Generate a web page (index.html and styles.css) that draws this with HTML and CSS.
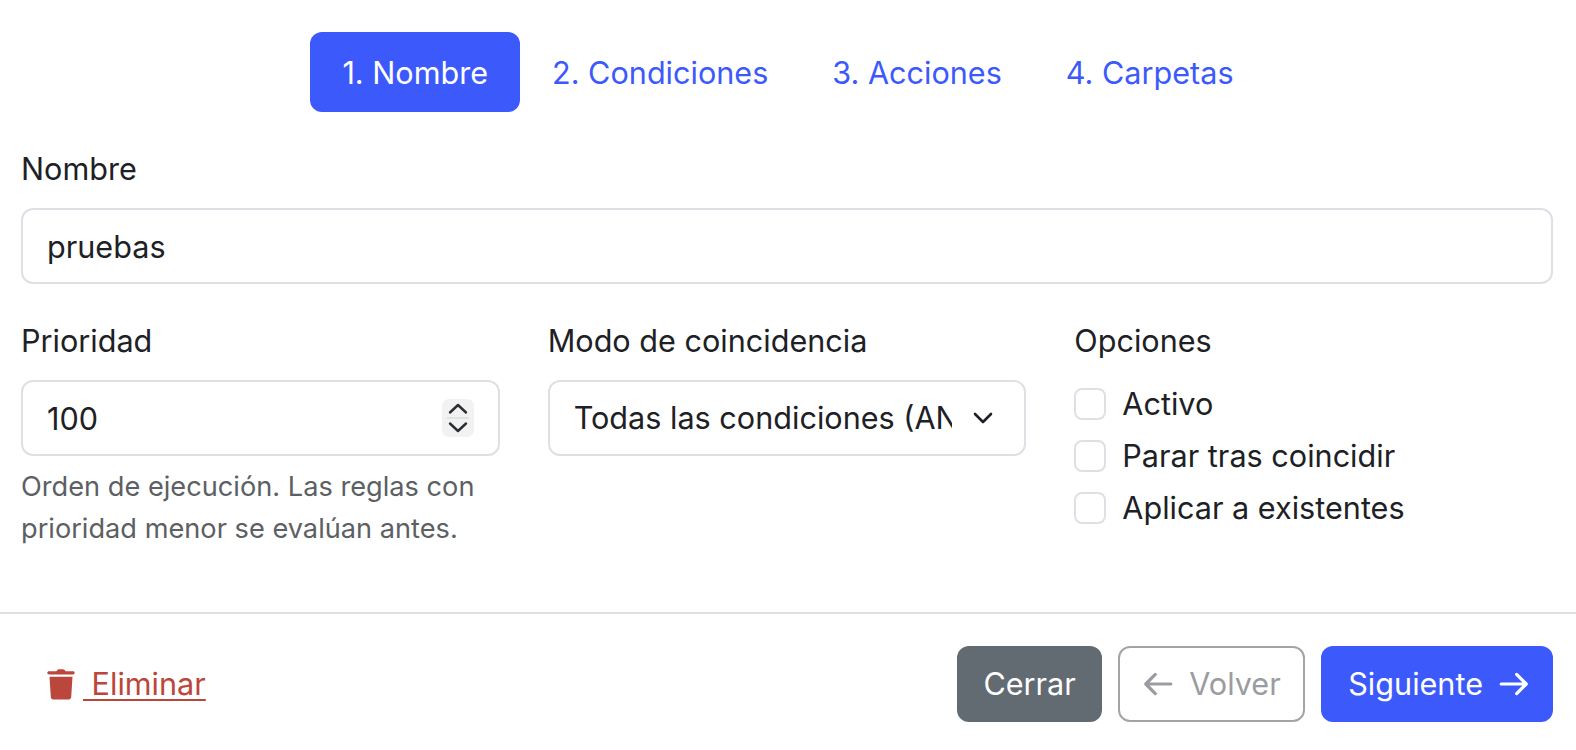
FILE: index.html
```html
<!DOCTYPE html>
<html lang="es">
<head>
<meta charset="utf-8">
<title>Regla</title>
<link rel="stylesheet" href="styles.css">
</head>
<body>
<div class="modal">
  <nav class="tabs">
    <a class="tab active">1. Nombre</a>
    <a class="tab">2. Condiciones</a>
    <a class="tab">3. Acciones</a>
    <a class="tab">4. Carpetas</a>
  </nav>
  <div class="field-name">
    <label class="label">Nombre</label>
    <input class="control" type="text" value="pruebas">
  </div>
  <div class="columns">
    <div>
      <label class="label">Prioridad</label>
      <div class="control-wrap">
        <input class="control" type="text" value="100">
        <span class="stepper">
          <svg viewBox="0 0 32 38" width="32" height="38"><rect width="32" height="38" rx="7" fill="#f2f2f3"/><path d="M5 19h22" stroke="#dcdcde" stroke-width="1.5"/><path d="M8 13.5 16 6l8 7.5M8 24.5l8 7.5 8-7.5" fill="none" stroke="#2a2e33" stroke-width="2.4" stroke-linecap="round" stroke-linejoin="round"/></svg>
        </span>
      </div>
      <p class="hint">Orden de ejecución. Las reglas con prioridad menor se evalúan antes.</p>
    </div>
    <div>
      <label class="label">Modo de coincidencia</label>
      <div class="control-wrap">
        <select class="control select"><option>Todas las condiciones (AND)</option></select>
        <svg class="chevron" viewBox="0 0 20 12" width="20" height="12"><path d="M2 2l8 8 8-8" fill="none" stroke="#1d2125" stroke-width="2.6" stroke-linecap="round" stroke-linejoin="round"/></svg>
      </div>
    </div>
    <div>
      <span class="label">Opciones</span>
      <label class="check"><input type="checkbox"><span>Activo</span></label>
      <label class="check"><input type="checkbox"><span>Parar tras coincidir</span></label>
      <label class="check"><input type="checkbox"><span>Aplicar a existentes</span></label>
    </div>
  </div>
  <footer class="footer">
    <a class="delete">
      <svg viewBox="0 0 28 32" width="28" height="32"><path d="M9.5 3.2C10 1.9 11 1.2 12.2 1.2h3.6c1.2 0 2.2.7 2.7 2H26c1 0 1.7.7 1.7 1.6S27 6.500 26 6.500H2C1 6.500.3 5.700.3 4.800S1 3.200 2 3.200zM2.500 8.800h23L24.200 29c-.1 1.500-1.300 2.600-2.800 2.600H6.600c-1.500 0-2.700-1.100-2.800-2.600z" fill="#bb463c"/></svg>
      <span class="delete-text">&nbsp;Eliminar</span>
    </a>
    <div class="actions">
      <button class="btn btn-gray">Cerrar</button>
      <button class="btn btn-outline">
        <svg viewBox="0 0 30 24" width="32" height="26"><path d="M27 12H4M12.500 3 3.500 12l9 9" fill="none" stroke="currentColor" stroke-width="3" stroke-linecap="round" stroke-linejoin="round"/></svg>
        Volver
      </button>
      <button class="btn btn-primary">
        Siguiente
        <svg viewBox="0 0 30 24" width="32" height="26"><path d="M3 12h23M17.500 3l9 9-9 9" fill="none" stroke="currentColor" stroke-width="3" stroke-linecap="round" stroke-linejoin="round"/></svg>
      </button>
    </div>
  </footer>
</div>
</body>
</html>
```

FILE: styles.css
```css
* { box-sizing: border-box; }
html, body { margin: 0; background: #fff; }
body {
  font-family: Inter, "Liberation Sans", sans-serif;
  font-size: 30.6px;
  line-height: 46px;
  color: #1d2125;
}
.modal { width: 1576px; height: 750px; overflow: hidden; }
.tabs {
  display: flex;
  justify-content: center;
  padding-top: 32px;
}
.tab {
  padding: 18px 32px;
  border-radius: 12px;
  color: #3c59fb;
  height: 80px;
}
.tab.active { background: #3c59fb; color: #fff; }
.field-name { padding: 34px 23px 0 21px; }
.label { display: block; height: 46px; margin-bottom: 16px; }
.control {
  display: block;
  width: 100%;
  height: 76px;
  padding: 0 24px;
  border: 2px solid #dfe0e5;
  border-radius: 12px;
  font: inherit;
  color: inherit;
  background: #fff;
  outline: none;
}
.columns {
  display: grid;
  grid-template-columns: repeat(3, 1fr);
  gap: 48px;
  padding: 34px 23px 0 21px;
}
.control-wrap { position: relative; }
.select { appearance: none; padding-right: 72px; }
.stepper { position: absolute; right: 26px; top: 19px; height: 38px; display: flex; }
.chevron { position: absolute; right: 33px; top: 32px; }
.hint {
  margin: 10px 0 0;
  font-size: 27.2px;
  line-height: 42px;
  color: #5c5f63;
}
.check {
  display: flex;
  align-items: center;
  gap: 16px;
  height: 52px;
}
.check input {
  appearance: none;
  width: 32px;
  height: 32px;
  margin: 0;
  border: 2px solid #dfe0e5;
  border-radius: 8px;
  background: #fff;
}
.columns > div:last-child .label { margin-bottom: 14px; }
.footer {
  margin-top: 62px;
  border-top: 2px solid #dfe0e5;
  padding: 32px 23px 0 47px;
  display: flex;
  justify-content: space-between;
  align-items: center;
}
.delete { display: flex; align-items: center; color: #bb463c; }
.delete svg { margin-right: 8px; margin-top: 0; }
.delete-text { text-decoration: underline; text-underline-offset: 4px; text-decoration-thickness: 2px; }
.actions { display: flex; gap: 16px; }
.btn {
  display: flex;
  align-items: center;
  gap: 15px;
  height: 76px;
  padding: 0 24px;
  border: 2px solid transparent;
  border-radius: 12px;
  font: inherit;
  color: #fff;
}
.btn-gray { background: #626a72; }
.btn-outline { background: #fff; border-color: #a2a4a8; color: #9a9ca1; padding: 0 22.5px; }
.btn-primary { background: #3c59fb; padding: 0 21px 0 25px; }
```
